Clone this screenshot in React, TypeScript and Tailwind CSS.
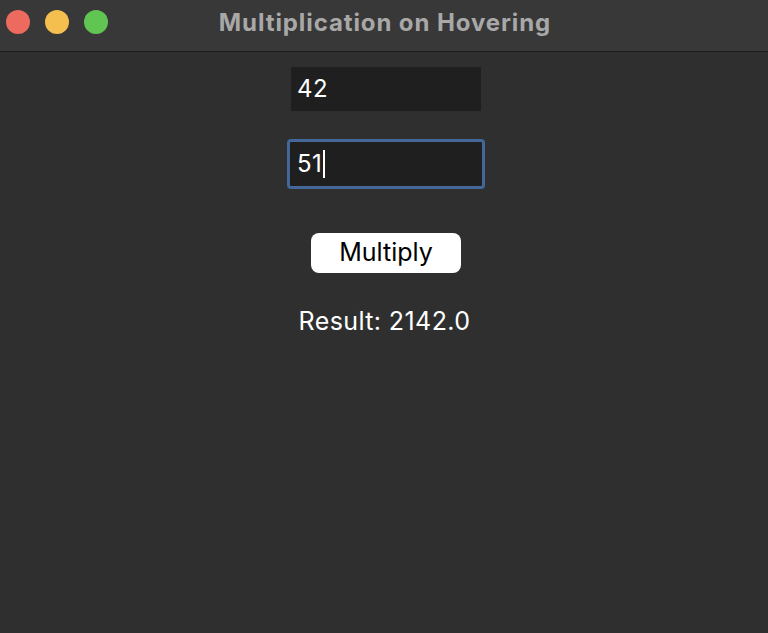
export default function App() {
  return (
    <div className="w-[768px] h-[633px] flex flex-col bg-[#2f2f2f]" style={{ fontFamily: 'Inter, "Liberation Sans", Arial, sans-serif' }}>
      {/* window title bar */}
      <div className="relative h-[52px] shrink-0 bg-[#383838] border-b border-[#1c1c1c] flex items-center justify-center">
        <div className="absolute left-[6px] top-[10px] flex gap-[15px]">
          <span className="w-[24px] h-[24px] rounded-full bg-[#ed6a5e]" />
          <span className="w-[24px] h-[24px] rounded-full bg-[#f5bf4f]" />
          <span className="w-[24px] h-[24px] rounded-full bg-[#61c554]" />
        </div>
        <span className="text-[24px] font-bold text-[#a8a8a8] tracking-[0.9px] ml-[2px] -mt-[5px]">Multiplication on Hovering</span>
      </div>

      {/* form */}
      <div className="flex flex-col items-center pt-[15px] ml-[4px]">
        <div className="w-[190px] h-[44px] bg-[#1f1f1f] flex items-center px-[6px] text-[24px] tracking-[0.5px] text-white">42</div>
        <div className="mt-[28px] w-[198px] h-[50px] rounded-[4px] border-[3px] border-[#44679a] bg-[#1f1f1f] flex items-center px-[7px] text-[24px] tracking-[0.5px] text-white">
          <span>51</span>
          <span className="w-[2px] h-[28px] bg-white ml-[1px]" />
        </div>
        <button className="mt-[44px] w-[150px] h-[40px] rounded-[8px] bg-white text-black text-[25px] flex items-center justify-center">Multiply</button>
        <div className="mt-[33px] text-[25px] tracking-[0.4px] text-white leading-[30px] -ml-[3px]">Result: 2142.0</div>
      </div>
    </div>
  );
}
